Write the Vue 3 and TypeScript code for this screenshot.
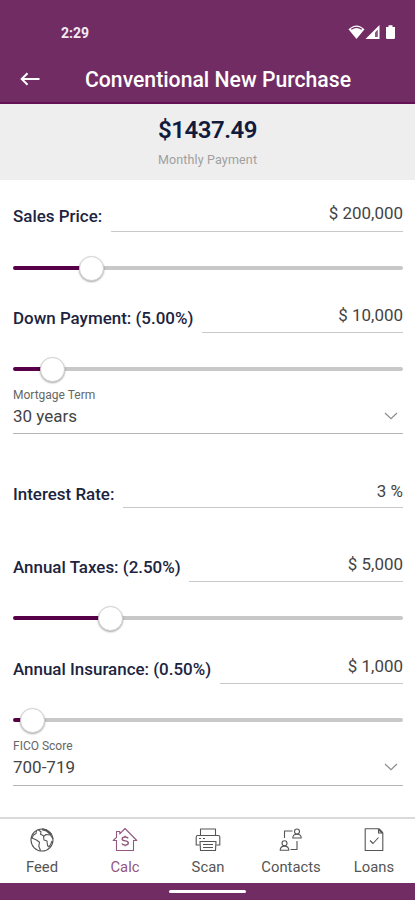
<script setup lang="ts">
interface Field {
  kind: 'slider' | 'plain' | 'select'
  name: string
  label: string
  value: string
  position?: number
}

interface Tab {
  id: string
  label: string
}

const fields: Field[] = [
  { kind: 'slider', name: 'price', label: 'Sales Price:', value: '$ 200,000', position: 78 },
  { kind: 'slider', name: 'down', label: 'Down Payment: (5.00%)', value: '$ 10,000', position: 39 },
  { kind: 'select', name: 'term', label: 'Mortgage Term', value: '30 years' },
  { kind: 'plain', name: 'rate', label: 'Interest Rate:', value: '3 %' },
  { kind: 'slider', name: 'taxes', label: 'Annual Taxes: (2.50%)', value: '$ 5,000', position: 97.5 },
  { kind: 'slider', name: 'insurance', label: 'Annual Insurance: (0.50%)', value: '$ 1,000', position: 19.5 },
  { kind: 'select', name: 'fico', label: 'FICO Score', value: '700-719' },
]

const tabs: Tab[] = [
  { id: 'feed', label: 'Feed' },
  { id: 'calc', label: 'Calc' },
  { id: 'scan', label: 'Scan' },
  { id: 'contacts', label: 'Contacts' },
  { id: 'loans', label: 'Loans' },
]
</script>

<template>
  <div class="screen">
    <header class="top">
      <div class="status">
        <span class="clock">2:29</span>
        <svg class="status-icons" width="50" height="16" viewBox="0 0 50 16">
          <path d="M.5 5.200Q8.500-2.400 16.500 5.200L8.500 15z" fill="#fff" />
          <path d="M3.200 5.300Q8.500 1.400 13.800 5.300" fill="none" stroke="#702c63" stroke-width="1.300" />
          <path d="M17.500 15L31.500 1V15z" fill="#fff" />
          <path d="M27 8.500L29.800 5.500V13H27z" fill="#8d5582" />
          <path d="M38 3h2.500V1.200h4V3H47v10.700q0 1.300-1.300 1.300h-6.400Q38 15 38 13.700z" fill="#fff" />
        </svg>
      </div>
      <div class="title-bar">
        <svg class="back" width="20" height="14" viewBox="0 0 20 14" fill="none" stroke="#fff" stroke-width="2">
          <path d="M19.500 7H2M7.500 1.200L1.700 7l5.800 5.800" />
        </svg>
        <h1 class="title">Conventional New Purchase</h1>
      </div>
    </header>

    <section class="summary">
      <div class="amount">$1437.49</div>
      <div class="caption">Monthly Payment</div>
    </section>

    <main class="form">
      <div v-for="f in fields" :key="f.name" :class="['field', f.kind, f.name]">
        <template v-if="f.kind === 'select'">
          <div class="select-label">{{ f.label }}</div>
          <div class="select-row">
            <span>{{ f.value }}</span>
            <svg width="14" height="8" viewBox="0 0 14 8" fill="none" stroke="#8c8c8c" stroke-width="1.200">
              <path d="M1 1l6 5.700L13 1" />
            </svg>
          </div>
        </template>
        <template v-else>
          <div class="entry">
            <label class="label">{{ f.label }}</label>
            <div class="input">{{ f.value }}</div>
          </div>
          <div v-if="f.kind === 'slider'" class="slider">
            <div class="fill" :style="{ width: f.position + 'px' }"></div>
            <div class="thumb"></div>
            <div class="rest"></div>
          </div>
        </template>
      </div>
    </main>

    <nav class="tabs">
      <div v-for="t in tabs" :key="t.id" :class="['tab', { active: t.id === 'calc' }]">
        <svg class="icon" width="26" height="26" viewBox="0 0 26 26" fill="none" stroke="currentColor" stroke-width="1.100" stroke-linejoin="round">
          <template v-if="t.id === 'feed'">
            <circle cx="13" cy="13" r="11" />
            <path d="M7.500 4L7 6.500 4.500 8 3 11l4.500 2 3 2.200-.7 4 1.700 4.300M9 2.800l3 2-.5 2.500 3 1.500M24 12l-2.500-4-4.500-.5-2.500 2 .5 3.500 3 1 .5 4.500 1.500 1.500 2-3.500 1-2.500" />
            <path d="M13 2.300l4.500 1.200 4.500 4" stroke-width="2.200" />
          </template>
          <template v-else-if="t.id === 'calc'">
            <path d="M4.500 13.500H1.200L4.500 10.300V4.500h3.300v2.400L13 1.500l11.800 12H21.500V23.500h-17z" />
            <path d="M16.200 11.300q-.7-1.300-3.100-1.300-2.900 0-2.900 2 0 1.500 3 1.900 3.100.4 3.100 2.200 0 2-3.100 2-2.700 0-3.300-1.500M13.100 8.800v1.200M13.100 18.100v1.200" stroke-width="1.400" />
          </template>
          <template v-else-if="t.id === 'scan'">
            <path d="M5.500 8.500V2h15v6.500M4.500 18H1.200v-8q0-1.500 1.500-1.500h20.600q1.500 0 1.500 1.500v8h-3.300M5 14.500h16L20.500 23.500h-15zM8 17.500h10M8 20.500h10M4 11.500h2M8 11.500h2" />
          </template>
          <template v-else-if="t.id === 'contacts'">
            <path d="M6.500 11V4H14.500M12.500 22.500H19V14" />
            <circle cx="19" cy="4.500" r="2.500" />
            <path d="M14.800 11q0-3.700 4.200-3.700t4.200 3.700z" />
            <circle cx="6.500" cy="16.300" r="2.500" />
            <path d="M2.200 23.300q0-4.200 4.300-4.200t4.300 4.200z" />
          </template>
          <template v-else>
            <path d="M4.200 1.800H18l3.800 4V23.500H4.200zM17.500 2v4h4" />
            <path d="M9 13.500l3 3 5.500-6" />
            <path d="M18 2.500l3 3" stroke-width="1.800" />
          </template>
        </svg>
        <span class="tab-label">{{ t.label }}</span>
      </div>
    </nav>
    <div class="home-bar"><div class="home-pill"></div></div>
  </div>
</template>

<style>
body {
  background: #fff;
}
</style>

<style scoped>
.screen {
  width: 415px;
  height: 900px;
  display: flex;
  flex-direction: column;
  overflow: hidden;
  background: #fff;
  font-family: Roboto, "Liberation Sans", sans-serif;
}
.top {
  flex: none;
  box-sizing: border-box;
  height: 104px;
  background: #702c63;
  border-bottom: 2px solid #641055;
}
.status {
  display: flex;
  justify-content: space-between;
  height: 56px;
  padding: 24px 17px 0 61px;
  box-sizing: border-box;
}
.clock {
  color: #f5eaf3;
  font-size: 14px;
  line-height: 18px;
  font-weight: 700;
}
.title-bar {
  display: flex;
  align-items: center;
  height: 46px;
  padding-left: 20px;
}
.back {
  margin-bottom: 1px;
}
.title {
  margin: 1px 0 0 45px;
  color: #fff;
  font-size: 21.200px;
  line-height: 24px;
  font-weight: 500;
}
.summary {
  flex: none;
  height: 76px;
  box-sizing: border-box;
  padding-top: 11px;
  background: #eee;
  text-align: center;
}
.amount {
  color: #111b3d;
  font-size: 24px;
  line-height: 30px;
  font-weight: 600;
  letter-spacing: -0.500px;
}
.caption {
  margin-top: 7px;
  color: #a0a0a0;
  font-size: 12.500px;
  line-height: 16px;
  letter-spacing: 0.150px;
}
.form {
  flex: none;
  height: 637px;
  box-sizing: border-box;
  padding: 18px 12px 0 13px;
}
.entry {
  display: flex;
  gap: 8.500px;
  height: 34px;
}
.label {
  color: #1c2440;
  font-size: 16.950px;
  line-height: 20px;
  padding-top: 8px;
  font-weight: 500;
  white-space: nowrap;
}
.input {
  flex: 1;
  border-bottom: 1.500px solid #c9c9c9;
  color: #444;
  font-size: 16.950px;
  line-height: 20px;
  padding-top: 5px;
  text-align: right;
}
.field > .slider {
  display: flex;
  align-items: center;
  height: 26px;
  margin-top: 23px;
}
.fill {
  height: 4px;
  flex: none;
  background: #580047;
  border-radius: 2px 0 0 2px;
}
.thumb {
  flex: none;
  box-sizing: border-box;
  width: 25px;
  height: 25px;
  margin: 0 -12.500px;
  border-radius: 50%;
  background: #fff;
  border: 1px solid #d2d2d2;
  box-shadow: 0 1px 2px rgba(0, 0, 0, 0.35);
  position: relative;
}
.rest {
  flex: 1;
  height: 4px;
  background: #c8c8c8;
  border-radius: 0 2px 2px 0;
}
.field.down {
  margin-top: 18px;
}
.down .label,
.taxes .label,
.insurance .label {
  padding-top: 9px;
}
.down .input,
.taxes .input,
.insurance .input {
  padding-top: 6px;
}
.field.rate {
  margin-top: 40px;
}
.rate .label {
  padding-top: 10px;
}
.rate .input {
  padding-top: 7px;
}
.field.taxes {
  margin-top: 40.500px;
}
.field.insurance {
  margin-top: 19px;
}
.select-label {
  color: #666;
  font-size: 12px;
  line-height: 14px;
  padding-top: 6px;
}
.select-row {
  display: flex;
  justify-content: space-between;
  align-items: center;
  height: 32.500px;
  box-sizing: border-box;
  padding: 0 5.500px 4px 0;
  border-bottom: 1.500px solid #b5b5b5;
  color: #444;
  font-size: 17px;
}
.term .select-row {
  height: 31.500px;
  padding-bottom: 3px;
}
.tabs {
  flex: none;
  box-sizing: border-box;
  height: 66px;
  display: grid;
  grid-template-columns: repeat(5, 1fr);
  border-top: 2px solid #dadada;
  padding-top: 8px;
}
.tab {
  display: flex;
  flex-direction: column;
  align-items: center;
  color: #555;
}
.tab.active {
  color: #91577f;
}
.tab-label {
  margin-top: 6px;
  padding-left: 1px;
  font-size: 14.800px;
  line-height: 16px;
}
.home-bar {
  flex: none;
  display: flex;
  justify-content: center;
  align-items: center;
  height: 17px;
  background: #702c63;
}
.home-pill {
  width: 77px;
  height: 3px;
  border-radius: 2px;
  background: #fff;
}
</style>
